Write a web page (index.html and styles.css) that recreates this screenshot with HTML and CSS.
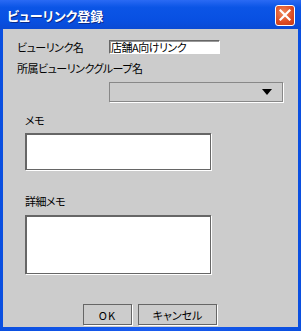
FILE: index.html
```html
<!DOCTYPE html>
<html lang="ja">
<head>
    <meta charset="UTF-8">
    <title>ビューリンク登録</title>
    <link rel="stylesheet" href="styles.css">
</head>
<body>
    <div class="window">
        <div class="titlebar">
            <span class="title">ビューリンク登録</span>
            <button class="close" aria-label="閉じる">
                <svg width="12" height="12" viewBox="0 0 12 12">
                    <path d="M1.5 1.5 L10.5 10.5 M10.5 1.5 L1.5 10.5" stroke="#fff" stroke-width="2.2" stroke-linecap="square"/>
                </svg>
            </button>
        </div>
        <div class="content">
            <div class="row name-row">
                <span class="label">ビューリンク名</span>
                <div class="field">店舗A向けリンク</div>
            </div>
            <div class="label group-label">所属ビューリンクグループ名</div>
            <div class="combo">
                <span class="arrow"></span>
            </div>
            <div class="label memo-label">メモ</div>
            <div class="area memo"></div>
            <div class="label detail-label">詳細メモ</div>
            <div class="area detail"></div>
            <div class="buttons">
                <button class="btn ok">OK</button>
                <button class="btn cancel">キャンセル</button>
            </div>
        </div>
    </div>
</body>
</html>
```

FILE: styles.css
```css
* {
    margin: 0;
    padding: 0;
    box-sizing: border-box;
}

body {
    width: 301px;
    height: 331px;
    overflow: hidden;
    font-family: "Noto Sans CJK JP", "DejaVu Sans", sans-serif;
    font-size: 11px;
    font-feature-settings: "palt";
    letter-spacing: -0.5px;
    color: #000;
}

.window {
    width: 301px;
    height: 331px;
    display: flex;
    flex-direction: column;
    background: linear-gradient(to right, #0a4fe0, #1a5cf0 50%, #0a4fe0);
    padding: 0 3px 4px 3px;
}

.titlebar {
    height: 29px;
    display: flex;
    align-items: center;
    justify-content: space-between;
    background: linear-gradient(to bottom, #2a6af4 0%, #0b55e6 25%, #0850e2 70%, #0a4ad4 100%);
    margin: 0 -3px;
    padding-left: 7px;
    padding-right: 6px;
}

.title {
    color: #fff;
    font-weight: bold;
    font-size: 13px;
    letter-spacing: 0;
    text-shadow: 1px 1px 0 #0a2a8a;
    margin-top: 1px;
}

.close {
    width: 20px;
    height: 21px;
    border: 1px solid #fff;
    border-radius: 3px;
    background: radial-gradient(circle at 40% 35%, #f08a5c, #dc4a22 60%, #c43a16);
    display: flex;
    align-items: center;
    justify-content: center;
    margin-top: 1px;
}

.content {
    flex: 1;
    background: #cccccc;
    display: flex;
    flex-direction: column;
    padding: 10px 0 0 0;
}

.label {
    line-height: 16px;
    height: 16px;
}

.row {
    display: flex;
    align-items: center;
}

.name-row .label {
    width: 92px;
    margin-left: 14px;
}

.field {
    width: 111px;
    height: 14px;
    background: #fff;
    border-top: 1px solid #666;
    border-left: 1px solid #666;
    border-right: 1px solid #fff;
    border-bottom: 1px solid #fff;
    box-shadow: inset 1px 1px 0 #999;
    line-height: 12px;
    padding-left: 1px;
    white-space: nowrap;
    overflow: hidden;
}

.group-label {
    margin: 5px 0 0 14px;
}

.combo {
    margin: 6px 0 0 106px;
    width: 174px;
    height: 20px;
    border: 1px solid #888;
    box-shadow: 1px 1px 0 #fff;
    background: #cccccc;
    display: flex;
    align-items: center;
    justify-content: flex-end;
    padding-right: 10px;
}

.arrow {
    width: 0;
    height: 0;
    border-left: 5px solid transparent;
    border-right: 5px solid transparent;
    border-top: 6px solid #000;
}

.memo-label {
    margin: 10px 0 0 22px;
}

.area {
    margin-left: 22px;
    width: 186px;
    background: #fff;
    border-top: 2px solid #666;
    border-left: 2px solid #666;
    border-right: 1px solid #666;
    border-bottom: 1px solid #666;
    box-shadow: 1px 1px 0 #fff;
}

.memo {
    margin-top: 5px;
    height: 37px;
}

.detail-label {
    margin: 23px 0 0 22px;
}

.detail {
    margin-top: 6px;
    height: 59px;
}

.buttons {
    display: flex;
    gap: 6px;
    margin: 30px 0 0 80px;
}

.btn {
    height: 21px;
    background: #cccccc;
    border: 1px solid #666;
    box-shadow: 1px 1px 0 #fff;
    font-family: "Noto Sans CJK JP", "DejaVu Sans", sans-serif;
    font-size: 11px;
    font-feature-settings: "palt";
    color: #000;
}

.ok {
    width: 49px;
    letter-spacing: 1px;
}

.cancel {
    width: 79px;
}
```
